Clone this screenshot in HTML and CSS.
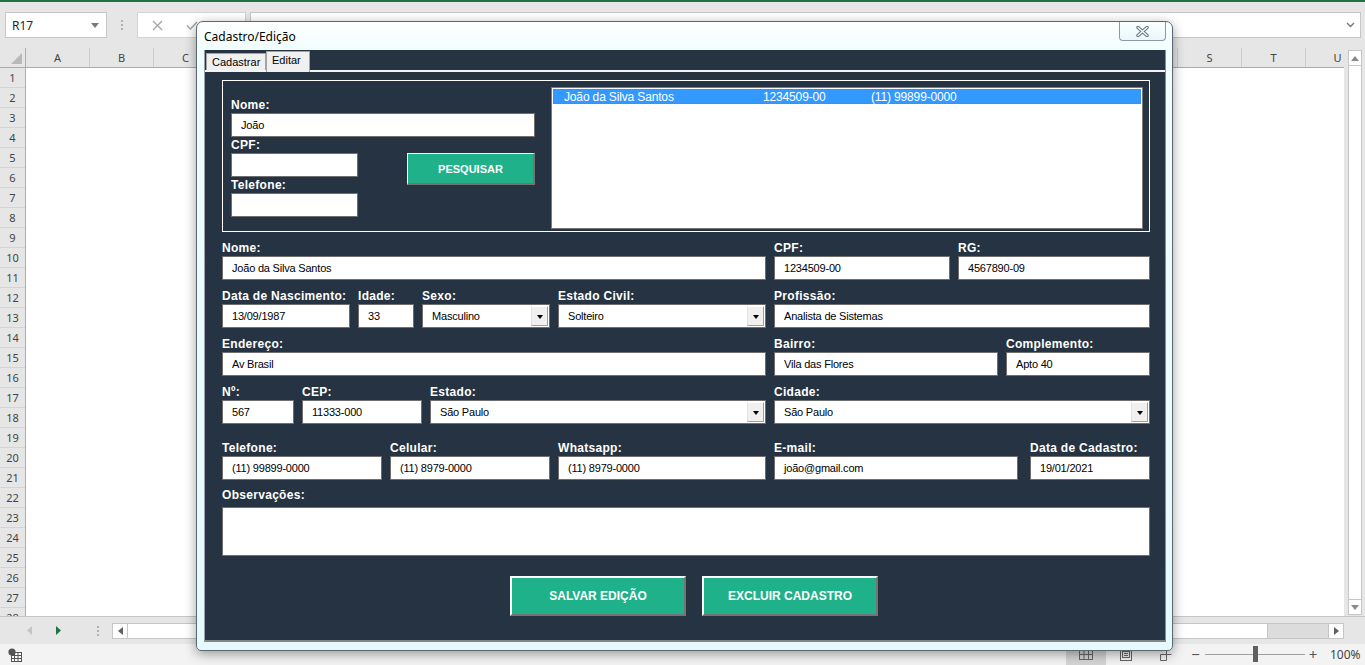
FILE: index.html
```html
<!DOCTYPE html>
<html lang="pt-BR">
<head>
<meta charset="utf-8">
<title>Cadastro/Edição</title>
<link rel="stylesheet" href="styles.css">
</head>
<body>
<div class="app">
  <div class="topline"></div>
  <div class="fbar">
    <div class="namebox"><span>R17</span><svg width="8" height="5" viewBox="0 0 8 5"><path d="M0 0h8L4 5z" fill="#7a7a7a"/></svg></div>
    <svg class="vdots" width="4" height="12" viewBox="0 0 4 12"><circle cx="2" cy="2" r="1.1" fill="#a8a8a8"/><circle cx="2" cy="6" r="1.1" fill="#a8a8a8"/><circle cx="2" cy="10" r="1.1" fill="#a8a8a8"/></svg>
    <div class="fxbox">
      <svg class="ic-x" width="11" height="11" viewBox="0 0 11 11"><path d="M1 1L10 10M10 1L1 10" stroke="#a6a6a6" stroke-width="1.4" fill="none"/></svg>
      <svg class="ic-ok" width="12" height="9" viewBox="0 0 12 9"><path d="M1 4.5L4.5 8L11 1" stroke="#a6a6a6" stroke-width="1.5" fill="none"/></svg>
    </div>
    <div class="formula"><svg width="9" height="6" viewBox="0 0 9 6"><path d="M1 1L4.5 4.5L8 1" stroke="#777" stroke-width="1.4" fill="none"/></svg></div>
  </div>

  <div class="sheet">
    <div class="grid-area">
      <div class="colhdr">
        <div class="corner"><svg width="11" height="11" viewBox="0 0 11 11"><path d="M11 0V11H0z" fill="#b9b9b9"/></svg></div>
        <div class="ch">A</div><div class="ch">B</div><div class="ch">C</div><div class="ch"></div><div class="ch"></div><div class="ch"></div><div class="ch"></div><div class="ch"></div><div class="ch"></div><div class="ch"></div><div class="ch"></div><div class="ch"></div><div class="ch"></div><div class="ch"></div><div class="ch"></div><div class="ch"></div><div class="ch"></div><div class="ch"></div><div class="ch">S</div><div class="ch">T</div><div class="ch">U</div>
      </div>
      <div class="sheet-body">
        <div class="rowhdr">
          <div class="rh">1</div><div class="rh">2</div><div class="rh">3</div><div class="rh">4</div><div class="rh">5</div><div class="rh">6</div><div class="rh">7</div><div class="rh">8</div><div class="rh">9</div><div class="rh">10</div><div class="rh">11</div><div class="rh">12</div><div class="rh">13</div><div class="rh">14</div><div class="rh">15</div><div class="rh">16</div><div class="rh">17</div><div class="rh">18</div><div class="rh">19</div><div class="rh">20</div><div class="rh">21</div><div class="rh">22</div><div class="rh">23</div><div class="rh">24</div><div class="rh">25</div><div class="rh">26</div><div class="rh">27</div><div class="rh">28</div>
        </div>
        <div class="cells"></div>
      </div>
    </div>
    <div class="vscroll">
      <div class="sbtn"><svg width="8" height="5" viewBox="0 0 8 5"><path d="M0 5h8L4 0z" fill="#8a8a8a"/></svg></div>
      <div class="vtrack"></div>
      <div class="sbtn"><svg width="8" height="5" viewBox="0 0 8 5"><path d="M0 0h8L4 5z" fill="#8a8a8a"/></svg></div>
    </div>
  </div>

  <div class="tabbar">
    <svg class="nav-l" width="5" height="9" viewBox="0 0 5 9"><path d="M5 0V9L0 4.5z" fill="#c4c4c4"/></svg>
    <svg class="nav-r" width="5" height="9" viewBox="0 0 5 9"><path d="M0 0V9L5 4.5z" fill="#217346"/></svg>
    <svg class="tdots" width="4" height="12" viewBox="0 0 4 12"><circle cx="2" cy="2" r="1.1" fill="#a8a8a8"/><circle cx="2" cy="6" r="1.1" fill="#a8a8a8"/><circle cx="2" cy="10" r="1.1" fill="#a8a8a8"/></svg>
    <div class="hscroll">
      <div class="hbtn"><svg width="5" height="8" viewBox="0 0 5 8"><path d="M5 0V8L0 4z" fill="#606060"/></svg></div>
      <div class="hthumb"></div>
      <div class="htrack"></div>
      <div class="hbtn"><svg width="5" height="8" viewBox="0 0 5 8"><path d="M0 0V8L5 4z" fill="#606060"/></svg></div>
    </div>
  </div>

  <div class="status">
    <svg class="macro" width="14" height="14" viewBox="0 0 14 14"><rect x="3.5" y="4.5" width="10" height="9" fill="#fff" stroke="#555"/><path d="M3.5 7.5h10M3.5 10.5h10M6.5 4.5v9M10 4.5v9" stroke="#555" stroke-width="1"/><circle cx="4" cy="4" r="3.6" fill="#555"/></svg>
    <div class="status-right">
      <div class="vbtn on"><svg width="14" height="11" viewBox="0 0 14 11"><rect x="0.5" y="0.5" width="13" height="10" fill="none" stroke="#666"/><path d="M0.5 5.5h13M5 0.5v10M9.5 0.5v10" stroke="#666"/></svg></div>
      <div class="vbtn"><svg width="12" height="13" viewBox="0 0 12 13"><rect x="0.5" y="0.5" width="11" height="12" fill="none" stroke="#666"/><rect x="2.5" y="3.5" width="7" height="6" fill="none" stroke="#666"/><path d="M4 5.5h4M4 7.5h4" stroke="#666"/></svg></div>
      <div class="vbtn"><svg width="12" height="13" viewBox="0 0 12 13"><path d="M0.5 6.5V12.5H6.5V6.5zM6.5 0.5V6.5H11.5" fill="none" stroke="#666"/></svg></div>
      <div class="zminus">−</div>
      <div class="zslider"><div class="zthumb"></div></div>
      <div class="zplus">+</div>
      <div class="zpct">100%</div>
    </div>
  </div>
</div>

<div class="dialog">
  <div class="titlebar">
    <div class="title">Cadastro/Edição</div>
    <div class="close"><svg width="13" height="11" viewBox="0 0 13 11"><path d="M2 1.5L11 9.5M11 1.5L2 9.5" stroke="#66727c" stroke-width="3.4" stroke-linecap="round" fill="none"/><path d="M2 1.5L11 9.5M11 1.5L2 9.5" stroke="#f4fcfd" stroke-width="1.4" stroke-linecap="round" fill="none"/></svg></div>
  </div>
  <div class="client">
    <div class="tabs">
      <div class="tab t1">Cadastrar</div>
      <div class="tab t2 sel">Editar</div>
    </div>
    <div class="tabline"></div>
    <div class="page">
      <div class="search">
        <div class="s-left">
          <div class="lbl">Nome:</div>
          <div class="tb">João</div>
          <div class="s-sub">
            <div class="s-col">
              <div class="lbl sp">CPF:</div>
              <div class="tb"></div>
              <div class="lbl sp">Telefone:</div>
              <div class="tb"></div>
            </div>
            <div class="btn btn-pesq">PESQUISAR</div>
          </div>
        </div>
        <div class="listbox">
          <div class="li sel"><span class="c1">João da Silva Santos</span><span class="c2">1234509-00</span><span>(11) 99899-0000</span></div>
        </div>
      </div>

      <div class="row r1">
        <div class="fld"><div class="lbl">Nome:</div><div class="tb">João da Silva Santos</div></div>
        <div class="fld"><div class="lbl">CPF:</div><div class="tb">1234509-00</div></div>
        <div class="fld"><div class="lbl">RG:</div><div class="tb">4567890-09</div></div>
      </div>
      <div class="row r2">
        <div class="fld"><div class="lbl">Data de Nascimento:</div><div class="tb">13/09/1987</div></div>
        <div class="fld"><div class="lbl">Idade:</div><div class="tb">33</div></div>
        <div class="fld"><div class="lbl">Sexo:</div><div class="tb combo"><span class="val">Masculino</span><span class="drop"></span></div></div>
        <div class="fld"><div class="lbl">Estado Civil:</div><div class="tb combo"><span class="val">Solteiro</span><span class="drop"></span></div></div>
        <div class="fld"><div class="lbl">Profissão:</div><div class="tb">Analista de Sistemas</div></div>
      </div>
      <div class="row r3">
        <div class="fld"><div class="lbl">Endereço:</div><div class="tb">Av Brasil</div></div>
        <div class="fld"><div class="lbl">Bairro:</div><div class="tb">Vila das Flores</div></div>
        <div class="fld"><div class="lbl">Complemento:</div><div class="tb">Apto 40</div></div>
      </div>
      <div class="row r4">
        <div class="fld"><div class="lbl">Nº:</div><div class="tb">567</div></div>
        <div class="fld"><div class="lbl">CEP:</div><div class="tb">11333-000</div></div>
        <div class="fld"><div class="lbl">Estado:</div><div class="tb combo"><span class="val">São Paulo</span><span class="drop"></span></div></div>
        <div class="fld"><div class="lbl">Cidade:</div><div class="tb combo"><span class="val">São Paulo</span><span class="drop"></span></div></div>
      </div>
      <div class="row r5">
        <div class="fld"><div class="lbl">Telefone:</div><div class="tb">(11) 99899-0000</div></div>
        <div class="fld"><div class="lbl">Celular:</div><div class="tb">(11) 8979-0000</div></div>
        <div class="fld"><div class="lbl">Whatsapp:</div><div class="tb">(11) 8979-0000</div></div>
        <div class="fld"><div class="lbl">E-mail:</div><div class="tb email">joão@gmail.com</div></div>
        <div class="fld"><div class="lbl">Data de Cadastro:</div><div class="tb">19/01/2021</div></div>
      </div>
      <div class="obs">
        <div class="lbl">Observações:</div>
        <div class="tb area"></div>
      </div>
      <div class="actions">
        <div class="btn btn-big">SALVAR EDIÇÃO</div>
        <div class="btn btn-big">EXCLUIR CADASTRO</div>
      </div>
    </div>
  </div>
</div>
</body>
</html>
```

FILE: styles.css
```css
* { box-sizing: border-box; }
html, body { margin: 0; padding: 0; }
body {
  width: 1365px;
  height: 665px;
  overflow: hidden;
  position: relative;
  background: #e6e6e6;
  font-family: "Liberation Sans", Arial, sans-serif;
}

/* ---------- Excel shell ---------- */
.app { display: flex; flex-direction: column; height: 665px; }
.topline { flex: none; height: 2px; background: #217346; }

.fbar { flex: none; height: 46px; display: flex; align-items: flex-start; padding-top: 10px; }
.namebox {
  margin-left: 5px; width: 102px; height: 26px;
  background: #fff; border: 1px solid #c6c6c6;
  display: flex; align-items: center; justify-content: space-between;
  padding: 0 7px 0 6px;
  font-family: "Noto Sans", sans-serif; font-size: 12px; color: #262626;
}
.vdots { margin: 7px 0 0 13px; }
.fxbox {
  margin-left: 13px; width: 109px; height: 26px;
  background: #fff; border: 1px solid #d4d4d4;
  display: flex; align-items: center;
}
.ic-x { margin-left: 14px; }
.ic-ok { margin-left: 23px; }
.formula {
  margin-left: 4px; width: 1111px; height: 26px;
  background: #fff; border: 1px solid #c6c6c6;
  display: flex; align-items: center; justify-content: flex-end; padding-right: 5px;
}

.sheet { flex: none; height: 568px; display: flex; }
.grid-area { width: 1344px; display: flex; flex-direction: column; overflow: hidden; }
.colhdr { flex: none; height: 20px; display: flex; border-bottom: 1px solid #ababab; background: #e6e6e6; overflow: hidden; }
.corner {
  flex: none; width: 26px; border-right: 1px solid #ababab;
  display: flex; align-items: flex-end; justify-content: flex-end; padding: 0 3px 3px 0;
}
.ch {
  flex: none; width: 64px; border-right: 1px solid #cdcdcd;
  text-align: center; line-height: 19px;
  font-family: "Noto Sans", sans-serif; font-size: 11px; color: #444;
}
.sheet-body { flex: 1; display: flex; overflow: hidden; }
.rowhdr { flex: none; width: 26px; border-right: 1px solid #ababab; background: #e6e6e6; display: flex; flex-direction: column; overflow: hidden; }
.rh {
  flex: none; height: 20px; border-bottom: 1px solid #d4d4d4;
  text-align: center; line-height: 19px;
  font-family: "Noto Sans", sans-serif; font-size: 11px; color: #444;
}
.cells { flex: 1; background: #fff; }

.vscroll { flex: none; width: 21px; display: flex; flex-direction: column; padding: 2px 3px 1px 4px; }
.sbtn { flex: none; height: 16px; background: #fff; border: 1px solid #c6c6c6; display: flex; align-items: center; justify-content: center; }
.vtrack { flex: 1; background: #fff; border: 1px solid #c6c6c6; border-top: none; border-bottom: none; }

.tabbar { flex: none; height: 28px; border-top: 1px solid #c6c6c6; display: flex; align-items: center; background: #e6e6e6; }
.nav-l { margin-left: 27px; }
.nav-r { margin-left: 24px; }
.tdots { margin-left: 35px; }
.hscroll { margin-left: 12px; width: 1232px; height: 16px; display: flex; border: 1px solid #c6c6c6; background: #dcdcdc; }
.hbtn { flex: none; width: 15px; background: #fff; display: flex; align-items: center; justify-content: center; }
.hbtn:first-child { border-right: 1px solid #c6c6c6; }
.hbtn:last-child { border-left: 1px solid #c6c6c6; }
.hthumb { flex: none; width: 1140px; background: #fff; border-right: 1px solid #c6c6c6; }
.htrack { flex: 1; }

.status { flex: none; height: 21px; background: #f3f3f3; display: flex; align-items: center; }
.macro { margin-left: 8px; }
.status-right { margin-left: 1044px; display: flex; align-items: center; height: 21px; }
.vbtn { width: 40px; height: 21px; display: flex; align-items: center; justify-content: center; }
.vbtn.on { background: #d4d4d4; }
.zminus, .zplus { font-family: "Noto Sans", sans-serif; font-size: 15px; color: #555; text-align: center; line-height: 21px; }
.zminus { width: 19px; }
.zplus { width: 16px; }
.zslider { width: 100px; height: 1px; background: #a0a0a0; position: relative; }
.zthumb { position: absolute; left: 48px; top: -8px; width: 5px; height: 16px; background: #5f5f5f; }
.zpct { margin-left: 9px; font-family: "Noto Sans", sans-serif; font-size: 12px; color: #444; }

/* ---------- UserForm window ---------- */
.dialog {
  position: absolute; left: 196px; top: 21px;
  width: 977px; height: 630px;
  border: 1px solid #5b6874;
  border-radius: 7px 7px 5px 5px;
  background: linear-gradient(#ffffff 0, #f1fdfe 28px, #e4fafd 100%);
  box-shadow: 0 3px 12px rgba(0, 0, 0, .38);
  display: flex; flex-direction: column;
}
.titlebar { flex: none; height: 28px; display: flex; justify-content: space-between; align-items: flex-start; padding: 0 6px 0 7px; }
.title { margin-top: 6px; font-family: "Noto Sans", sans-serif; font-size: 12px; line-height: 17px; color: #000; }
.close {
  width: 47px; height: 19px;
  border: 1px solid #8c99a4; border-top: none; border-radius: 0 0 4px 4px;
  background: linear-gradient(#fbffff, #e9f8fb);
  display: flex; align-items: center; justify-content: center;
}
.client {
  flex: none; height: 592px; margin: 0 6px 0 7px;
  background: #263342;
  border-left: 1px solid #9aa3ab; border-right: 1px solid #8a8f94; border-bottom: 2px solid #858585;
  display: flex; flex-direction: column;
}
.tabs { flex: none; height: 20px; display: flex; align-items: flex-end; padding-left: 1px; }
.tab {
  flex: none; height: 17px; padding-left: 5px;
  background: #f0f0f0; border: 1px solid #a3a3a3; border-bottom: none;
  font-size: 11px; line-height: 16px; color: #000; white-space: nowrap; overflow: hidden;
}
.t1 { width: 60px; }
.t2 { width: 44px; }
.tab.sel { height: 21px; margin-bottom: -2px; position: relative; z-index: 1; line-height: 17px; }
.tabline { flex: none; height: 2px; background: #f4f4f4; }

.page { padding: 8px 0 0 17px; }
.lbl {
  height: 15px; line-height: 15px; white-space: nowrap;
  font-weight: bold; font-size: 12px; letter-spacing: .3px; color: #fff;
}
.tb {
  height: 24px; background: #fff; border: 1px solid #6f6f6f;
  display: flex; align-items: center; padding-left: 9px;
  font-size: 11px; letter-spacing: -.2px; color: #000; white-space: nowrap; overflow: hidden;
}

.search { width: 928px; height: 152px; border: 1px solid #fff; display: flex; }
.s-left { flex: none; width: 312px; padding: 17px 0 0 8px; }
.s-sub { display: flex; justify-content: space-between; }
.s-col { width: 127px; }
.lbl.sp { margin-top: 1px; }
.btn {
  background: #1fb18a; color: #fff; font-weight: bold;
  border-style: solid; border-color: #fbfbfb #737373 #737373 #fbfbfb;
  display: flex; align-items: center; justify-content: center; white-space: nowrap;
}
.btn-pesq { width: 128px; height: 32px; margin-top: 16px; border-width: 1px 2px 2px 1px; font-size: 11px; }
.listbox {
  flex: none; width: 592px; height: 142px; margin: 6px 0 0 16px;
  background: #fff; border: 1px solid #7a7a7a; padding: 1px 1px 0;
}
.li { height: 15px; display: flex; align-items: center; font-size: 12px; letter-spacing: -.15px; padding-left: 10px; white-space: nowrap; }
.li.sel { background: #3399ff; color: #fff; border: 1px dotted #b8732a; }
.c1 { width: 199px; }
.c2 { width: 108px; }

.row { display: grid; column-gap: 8px; margin-top: 9px; width: 928px; }
.r1 { grid-template-columns: 544px 176px 192px; }
.r2 { grid-template-columns: 128px 56px 128px 208px 376px; }
.r3 { grid-template-columns: 544px 224px 144px; }
.r4 { grid-template-columns: 72px 120px 336px 376px; }
.r5 { grid-template-columns: 160px 160px 208px 248px 120px; margin-top: 17px; }
.tb.email { width: 244px; }
.combo { padding-right: 1px; }
.combo .val { flex: 1; }
.drop {
  flex: none; width: 17px; height: 20px;
  background: #f0f0f0; border: 1px solid; border-color: #ffffff #a0a0a0 #a0a0a0 #e3e3e3;
  display: flex; align-items: center; justify-content: center;
}
.drop::after { content: ""; border-left: 3.5px solid transparent; border-right: 3.5px solid transparent; border-top: 4px solid #000; margin-top: 1px; }

.obs { margin-top: 8px; width: 928px; }
.tb.area { height: 49px; margin-top: 4px; }
.actions { display: flex; gap: 16px; padding-left: 288px; margin-top: 20px; }
.btn-big { width: 176px; height: 40px; border-width: 2px; font-size: 12px; }
```
